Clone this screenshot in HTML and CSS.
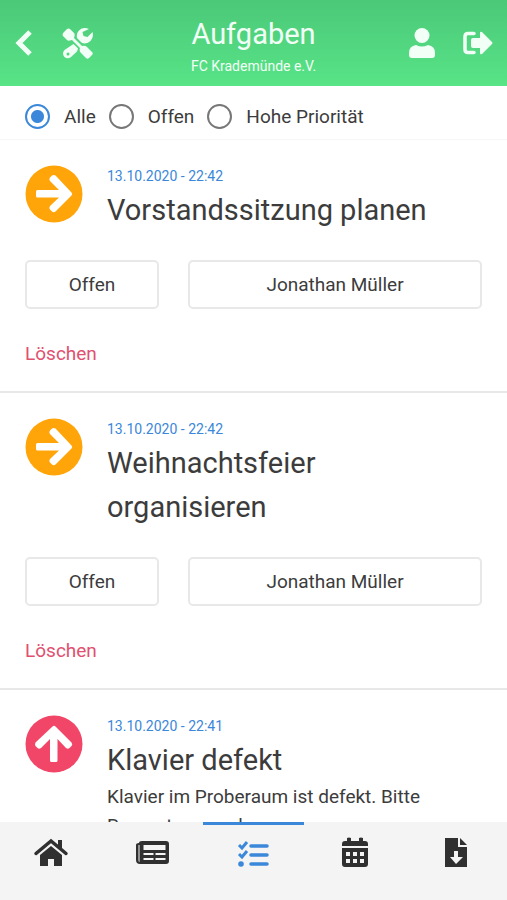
FILE: index.html
```html
<!DOCTYPE html>
<html lang="de">
<head>
<meta charset="utf-8">
<meta name="viewport" content="width=device-width, initial-scale=1">
<title>Aufgaben</title>
<link rel="stylesheet" href="styles.css">
</head>
<body>
<header class="topbar">
  <div class="topbar-side">
    <button class="icon-button" type="button" aria-label="Zurück"><svg class="icon-back" viewBox="0 0 18 28"><path d="M15 3 4 14l11 11" fill="none" stroke="currentColor" stroke-width="5"/></svg></button>
    <button class="icon-button" type="button" aria-label="Werkzeuge"><svg class="icon-tools" viewBox="0 0 32 32" fill="currentColor"><path d="M1.500 5.500 5 2q1.500-1 3 0l4 4q1 1 .5 3l-.5 2 8 8q3-1 5 1l5 5q1.500 1.500 0 3l-3 3q-1.500 1.500-3 0l-5-5q-2-2-1-5l-8-8-2 .5q-2 .5-3-.5l-4-4q-1-1.500 .5-3.500z"/><path d="M27 2q-6-2.500-10 1.500-3 3-2 7.500l5 5q5 1.500 8.500-2 3.500-4 2-9l-5 5-4-1-1-4zM11.500 17l4.500 4.500-1 3L9 30q-3.500 2.500-6.500 0-3-3.500 0-7z"/><circle cx="6" cy="27" r="1.500" fill="#50d77b"/></svg></button>
  </div>
  <div class="topbar-title">
    <h1>Aufgaben</h1>
    <p>FC Krademünde e.V.</p>
  </div>
  <div class="topbar-side topbar-right">
    <button class="icon-button" type="button" aria-label="Profil"><svg class="icon-user" viewBox="0 0 26 30" fill="currentColor"><circle cx="13" cy="7.500" r="7.500"/><path d="M7 17q6 3 12 0 7 1 7 8v2q0 3-3 3H3q-3 0-3-3v-2q0-7 7-8z"/></svg></button>
    <button class="icon-button" type="button" aria-label="Abmelden"><svg class="icon-exit" viewBox="0 0 30 24"><path d="M11 2.500H5Q2 2.500 2 5.500v13q0 3 3 3h6" fill="none" stroke="currentColor" stroke-width="3.500" stroke-linecap="round"/><path d="M8 9q0-2 2-2h7V2q0-2 2-1l10 10q1 1 0 2L19 23q-2 1-2-1v-5h-7q-2 0-2-2z" fill="currentColor"/></svg></button>
  </div>
</header>
<form class="filters">
  <label><input type="radio" name="filter" checked>Alle</label>
  <label><input type="radio" name="filter">Offen</label>
  <label><input type="radio" name="filter">Hohe Priorität</label>
</form>
<main class="tasks">
  <article class="task">
    <div class="task-head">
      <svg class="priority normal" viewBox="0 0 58 58"><circle cx="29" cy="29" r="28.500" fill="currentColor"/><path d="M11 26.500q0-1.500 1.500-1.500H34l-9-9q-1.500-2 0-3.500l2-2q1.500-1 3.500 0l16 17q1.500 1.500 0 3l-16 16q-2 1.500-3.500 0l-2-2q-1.500-1.500 0-3.500l9-8.500H12.500q-1.500 0-1.500-1.500z" fill="#fff"/></svg>
      <div class="task-text"><time>13.10.2020 - 22:42</time><h2>Vorstandssitzung planen</h2></div>
    </div>
    <div class="task-actions"><button type="button">Offen</button><button type="button">Jonathan Müller</button></div>
    <a class="delete" href="#">Löschen</a>
  </article>
  <article class="task">
    <div class="task-head">
      <svg class="priority normal" viewBox="0 0 58 58"><circle cx="29" cy="29" r="28.500" fill="currentColor"/><path d="M11 26.500q0-1.500 1.500-1.500H34l-9-9q-1.500-2 0-3.500l2-2q1.500-1 3.500 0l16 17q1.500 1.500 0 3l-16 16q-2 1.500-3.500 0l-2-2q-1.500-1.500 0-3.500l9-8.500H12.500q-1.500 0-1.500-1.500z" fill="#fff"/></svg>
      <div class="task-text"><time>13.10.2020 - 22:42</time><h2>Weihnachtsfeier organisieren</h2></div>
    </div>
    <div class="task-actions"><button type="button">Offen</button><button type="button">Jonathan Müller</button></div>
    <a class="delete" href="#">Löschen</a>
  </article>
  <article class="task">
    <div class="task-head">
      <svg class="priority high" viewBox="0 0 58 58"><circle cx="29" cy="29" r="28.500" fill="currentColor"/><path transform="rotate(-90 29 29)" d="M11 26.500q0-1.500 1.500-1.500H34l-9-9q-1.500-2 0-3.500l2-2q1.500-1 3.500 0l16 17q1.500 1.500 0 3l-16 16q-2 1.500-3.500 0l-2-2q-1.500-1.500 0-3.500l9-8.500H12.500q-1.500 0-1.500-1.500z" fill="#fff"/></svg>
      <div class="task-text"><time>13.10.2020 - 22:41</time><h2>Klavier defekt</h2><p>Klavier im Proberaum ist defekt. Bitte Reparatur anordnen.</p></div>
    </div>
  </article>
</main>
<nav class="tabs">
  <a href="#" aria-label="Start"><svg class="tab-icon" viewBox="0 0 36 32" fill="currentColor"><path d="m3 16.500 15-12.500 15 12.500" fill="none" stroke="currentColor" stroke-width="3.500" stroke-linecap="round"/><path d="M25 3h4v9l-4-3zM18 9l11 9v11h-8v-7h-6v7H7V18z"/></svg></a>
  <a href="#" aria-label="Neuigkeiten"><svg class="tab-icon" viewBox="0 0 36 32"><path fill="currentColor" fill-rule="evenodd" d="M8 4h24q3 0 3 3v17q0 3-3 3H6q-4 0-4-4V8q0-2 3-2 0-2 3-2zM4.500 8v15q0 2 1 2V8zM9.500 8v5h22V8zm0 8v2h10v-2zm12 0v2h10v-2zM9.500 21v2h10v-2zm12 0v2h10v-2z"/></svg></a>
  <a class="active" href="#" aria-label="Aufgaben"><svg class="tab-icon" viewBox="0 0 36 32" fill="none" stroke="currentColor" stroke-width="3"><path d="M16 9h16M16 18h16M16 27h16" stroke-width="3.500" stroke-linecap="round"/><path d="m4 8 3 3 5-6M4 17l3 3 5-6"/><circle cx="6" cy="27" r="2.800" fill="currentColor" stroke="none"/></svg></a>
  <a href="#" aria-label="Kalender"><svg class="tab-icon" viewBox="0 0 36 32" fill="currentColor"><path d="M5 9V7q0-3 3-3h2V1q2-1 4 0v3h8V1q2-1 4 0v3h2q3 0 3 3v2z"/><path fill-rule="evenodd" d="M5 11h26v16q0 3-3 3H8q-3 0-3-3zm4 4v4h4v-4zm7 0v4h4v-4zm7 0v4h4v-4zM9 22v4h4v-4zm7 0v4h4v-4zm7 0v4h4v-4z"/></svg></a>
  <a href="#" aria-label="Dateien"><svg class="tab-icon" viewBox="0 0 36 32" fill="currentColor"><path d="m22 1 7 7h-7z"/><path fill-rule="evenodd" d="M7 1h13v9h9v20H7zm9 13v6h-4l6 7 7-7h-5v-6z"/></svg></a>
</nav>
</body>
</html>
```
FILE: styles.css
```css
* { box-sizing: border-box; }

body {
  margin: 0;
  height: 100vh;
  display: flex;
  flex-direction: column;
  overflow: hidden;
  background: #fff;
  color: #3c3c3c;
  font-family: Roboto, "Liberation Sans", sans-serif;
  font-size: 19px;
  line-height: 29px;
}

h1, h2, p { margin: 0; font-weight: 400; }
button { font: inherit; color: inherit; }
svg { display: block; }

.topbar {
  display: grid;
  grid-template-columns: 1fr auto 1fr;
  align-items: center;
  height: 86px;
  padding: 0 14px;
  background: linear-gradient(#4bc878, #58e487);
  color: #f2fff6;
}
.topbar-side { display: flex; align-items: center; gap: 28px; }
.topbar-right { justify-content: flex-end; }
.topbar-title { padding-top: 6px; text-align: center; }
.topbar h1 { font-size: 29px; line-height: 40px; }
.topbar p { font-size: 14px; line-height: 24px; }
.icon-button { padding: 0; border: 0; background: none; }
.icon-back { width: 20px; height: 28px; }
.icon-tools { width: 32px; height: 32px; }
.icon-user { width: 26px; height: 30px; }
.icon-exit { width: 30px; height: 24px; }

.filters {
  display: flex;
  align-items: center;
  gap: 13px;
  height: 54px;
  padding: 7px 25px 0;
  border-bottom: 1px solid #f7f7f7;
}
.filters label { display: flex; align-items: center; gap: 14px; }
.filters input {
  appearance: none;
  width: 25px;
  height: 25px;
  margin: 0;
  border: 2px solid #777;
  border-radius: 50%;
}
.filters input:checked {
  border-color: #3b87d9;
  background: radial-gradient(circle, #3b87d9 6px, #fff 7px);
}

.tasks { flex: 1; min-height: 0; overflow: hidden; }
.task { padding: 25px 25px 23px; border-bottom: 2px solid #e8e8e8; }
.task-head { display: flex; gap: 24px; }
.priority { flex: none; width: 58px; height: 58px; }
.normal { color: #ffa50a; }
.high { color: #f14668; }
.task-text { flex: 1; }
.task time { display: block; font-size: 14px; line-height: 23px; color: #3b87d9; }
.task h2 { font-size: 29px; line-height: 44px; }
.task-actions {
  display: grid;
  grid-template-columns: 134px 1fr;
  gap: 29px;
  margin: 28px 0 30px;
}
.task-actions button {
  height: 49px;
  border: 2px solid #e8e8e8;
  border-radius: 5px;
  background: #fff;
}
.delete { display: block; color: #e0506f; text-decoration: none; }

.tabs {
  display: grid;
  grid-template-columns: repeat(5, 1fr);
  height: 78px;
  background: #f4f4f4;
}
.tabs a {
  display: flex;
  justify-content: center;
  padding-top: 12px;
  border-top: 3px solid transparent;
  color: #303030;
}
.tabs .active { border-color: #3b87d9; color: #3b87d9; }
.tab-icon { width: 36px; height: 32px; }
```
